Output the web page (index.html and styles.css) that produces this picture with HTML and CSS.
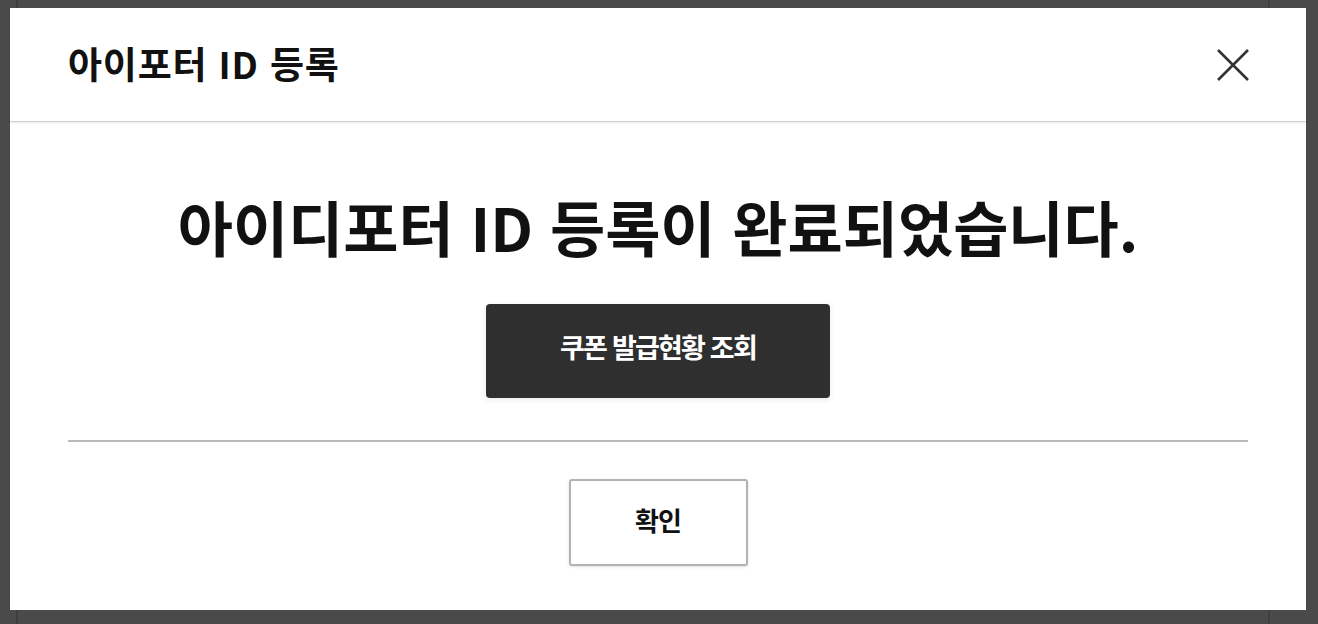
FILE: index.html
```html
<!DOCTYPE html>
<html lang="ko">
  <head>
    <meta charset="UTF-8" />
    <meta name="viewport" content="width=device-width, initial-scale=1.0" />
    <title>아이포터 ID 등록</title>
    <link rel="stylesheet" href="styles.css">
  </head>
  <body>
    <div class="page"></div>

    <section class="overlay">
      <div class="modal">
        <div class="modal-header">
          <h1>아이포터 ID 등록</h1>
          <button type="button" class="close-btn" aria-label="닫기">
            <svg width="34" height="34" viewBox="0 0 34 34">
              <path d="M2 2 L32 32 M32 2 L2 32" stroke="#333" stroke-width="2.6" fill="none" />
            </svg>
          </button>
        </div>
        <div class="modal-body">
          <p class="message">아이디포터 ID 등록이 완료되었습니다.</p>
          <button type="button" class="dark-btn">쿠폰 발급현황 조회</button>
          <div class="divider"></div>
          <button type="button" class="ok-btn">확인</button>
        </div>
      </div>
    </section>
  </body>
</html>
```

FILE: styles.css
```css
html,
body {
  height: 100%;
}

body {
  margin: 0;
  padding: 0;
  font-family: "Noto Sans CJK KR", "Noto Sans", sans-serif;
  background-color: #4a4a4a;
  overflow: hidden;
}

/* page behind the dim layer */
.page {
  margin-left: 16px;
  width: 1250px;
  height: 100%;
  border-left: 2px solid #3f3f3f;
  border-right: 2px solid #3f3f3f;
}

.overlay {
  position: fixed;
  top: 0;
  left: 0;
  right: 0;
  bottom: 0;
  padding: 8px 12px 14px 10px;
}

.modal {
  background-color: #fff;
  height: 602px;
  display: flex;
  flex-direction: column;
}

.modal-header {
  height: 113px;
  display: flex;
  align-items: center;
  justify-content: space-between;
  padding: 0 56px 0 58px;
  border-bottom: 1px solid #cfcfcf;
  box-shadow: 0 1px 2px rgba(0, 0, 0, 0.08);
}

.modal-header h1 {
  margin: 0 0 4px;
  font-size: 37px;
  font-weight: 700;
  letter-spacing: 0.8px;
  color: #111;
}

.close-btn {
  background: none;
  border: none;
  padding: 0;
  width: 34px;
  height: 34px;
  cursor: pointer;
}

.modal-body {
  padding: 0 58px;
  display: flex;
  flex-direction: column;
  align-items: center;
}

.message {
  margin: 64px 0 0;
  font-size: 60px;
  line-height: 80px;
  font-weight: 700;
  letter-spacing: 0;
  color: #111;
}

.dark-btn {
  margin-top: 38px;
  width: 344px;
  height: 94px;
  background-color: #2f2f2f;
  color: #fff;
  border: none;
  border-radius: 4px;
  font-family: inherit;
  font-size: 27px;
  font-weight: 700;
  letter-spacing: -1.8px;
  padding-bottom: 10px;
  box-shadow: 0 2px 6px rgba(0, 0, 0, 0.08);
  cursor: pointer;
}

.divider {
  align-self: stretch;
  margin-top: 42px;
  border-top: 2px solid #b9b9b9;
}

.ok-btn {
  margin-top: 37px;
  width: 179px;
  height: 87px;
  background-color: #fff;
  color: #111;
  border: 2px solid #b3b3b3;
  border-radius: 3px;
  font-family: inherit;
  font-size: 26px;
  font-weight: 700;
  letter-spacing: -1px;
  padding-bottom: 8px;
  box-shadow: 0 1px 3px rgba(0, 0, 0, 0.12);
  cursor: pointer;
}
```
